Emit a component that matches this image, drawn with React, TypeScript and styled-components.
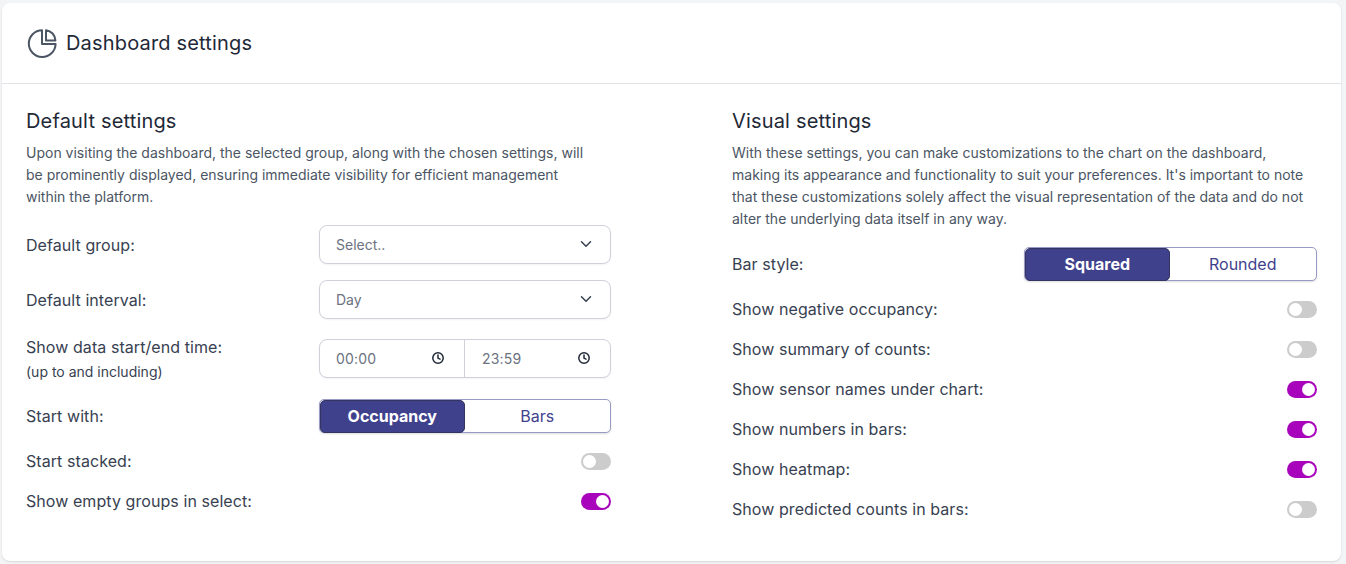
import React from "react";
import styled, { createGlobalStyle } from "styled-components";
import { ChevronDown } from "lucide-react";

const Global = createGlobalStyle`
  html, body { margin: 0; padding: 0; background: #f3f4f6; }
  body { font-family: Inter, "Noto Sans", sans-serif; color: #1f2937; }
  * { box-sizing: border-box; }
`;

const Page = styled.div`
  width: 1346px;
  height: 564px;
  padding: 3px 5px 3px 2px;
`;

const Card = styled.main`
  height: 558px;
  background: #fff;
  border-radius: 8px;
  box-shadow: 0 1px 2px rgba(0, 0, 0, 0.12);
`;

const Header = styled.header`
  height: 81px;
  display: flex;
  align-items: center;
  gap: 9px;
  padding: 0 24px 0 25px;
  border-bottom: 1px solid #e2e3e6;
`;

const Title = styled.h1`
  margin: 0;
  font-size: 20px;
  line-height: 28px;
  font-weight: 400;
  letter-spacing: 0.17px;
  color: #1f2937;
`;

const Body = styled.div`
  display: grid;
  grid-template-columns: 585px 585px;
  column-gap: 121px;
  padding: 23px 24px 0;
`;

const Column = styled.section`
  display: flex;
  flex-direction: column;
`;

const SectionTitle = styled.h2`
  margin: 0 0 7px;
  font-size: 20px;
  line-height: 28px;
  font-weight: 400;
  letter-spacing: 0.17px;
  color: #1f2937;
`;

const Description = styled.p<{ $gap: number }>`
  margin: 0 0 ${(p) => p.$gap}px;
  font-size: 14px;
  line-height: 22px;
  color: #4b5563;
`;

const Row = styled.div<{ $height: number; $gap?: number }>`
  height: ${(p) => p.$height}px;
  margin-bottom: ${(p) => p.$gap ?? 0}px;
  display: flex;
  align-items: center;
  justify-content: space-between;
`;

const Label = styled.div`
  font-size: 16px;
  line-height: 24px;
  font-weight: 400;
  letter-spacing: 0.07px;
  color: #374151;
`;

const SubLabel = styled.div`
  font-size: 14px;
  line-height: 20px;
  font-weight: 400;
  color: #374151;
  margin-top: 3px;
`;

const Control = styled.div`
  width: 292px;
  height: 39px;
  display: flex;
  align-items: center;
  border: 1px solid #d1d1dc;
  border-radius: 8px;
  background: #fff;
  box-shadow: 0 1px 2px rgba(0, 0, 0, 0.05);
`;

const SelectBox = styled(Control)`
  justify-content: space-between;
  padding: 0 16px;
  color: #6b7280;
  font-size: 14px;
`;

const Chevron = styled(ChevronDown)`
  width: 18px;
  height: 18px;
  color: #374151;
  margin-right: -1px;
  margin-top: -2px;
`;

const TimePart = styled.div`
  flex: 0 0 144px;
  height: 100%;
  display: flex;
  align-items: center;
  justify-content: space-between;
  padding: 0 20px 0 16px;
  color: #6b7280;
  font-size: 14px;
  letter-spacing: 0.2px;
  & + & {
    border-left: 1px solid #d1d1dc;
    flex-basis: 146px;
    padding-left: 17px;
  }
`;

const ClockIcon = styled.svg`
  width: 12px;
  height: 12px;
  margin-top: -2px;
  fill: none;
  stroke: #1f2937;
  stroke-width: 1.5;
  stroke-linecap: round;
  stroke-linejoin: round;
`;

const Segmented = styled.div<{ $wide?: boolean }>`
  width: ${(p) => (p.$wide ? 293 : 292)}px;
  height: 34px;
  display: grid;
  grid-template-columns: 144.5px 1fr;
  border: 1px solid #9a9ac6;
  border-radius: 5px;
  background: #fff;
  box-shadow: 0 1px 2px rgba(0, 0, 0, 0.14);
`;

const Segment = styled.div<{ $active?: boolean }>`
  margin: ${(p) => (p.$active ? "-0.5px" : "0")};
  display: flex;
  align-items: center;
  justify-content: center;
  font-size: 16px;
  font-weight: ${(p) => (p.$active ? 700 : 400)};
  color: ${(p) => (p.$active ? "#fff" : "#3f418d")};
  background: ${(p) => (p.$active ? "#3f418d" : "transparent")};
  border: ${(p) => (p.$active ? "1px solid #33345f" : "none")};
  border-radius: 5px;
`;

const Toggle = styled.span<{ $on?: boolean }>`
  position: relative;
  display: block;
  width: 30px;
  height: 17px;
  border-radius: 9px;
  background: ${(p) => (p.$on ? "#a804bb" : "#cccccc")};
  &::after {
    content: "";
    position: absolute;
    top: 2px;
    left: ${(p) => (p.$on ? "15px" : "2px")};
    width: 13px;
    height: 13px;
    border-radius: 50%;
    background: #fff;
  }
`;

const PieIcon = () => (
  <svg width="30" height="30" viewBox="0 0 30 30" fill="none" stroke="#4b5563" strokeWidth="2" strokeLinejoin="round" strokeLinecap="round">
    <path d="M15 2.2A13.4 13.4 0 1 0 28.6 16H15Z" />
    <path d="M19 2.2V12.4H28.4A10.6 10.6 0 0 0 19 2.2Z" />
  </svg>
);

const Clock = () => (
  <ClockIcon viewBox="0 0 12 12">
    <circle cx="6" cy="6" r="5.2" />
    <path d="M6 3v3.2l2 1" />
  </ClockIcon>
);

const SwitchRow = ({ label, on }: { label: string; on?: boolean }) => (
  <Row $height={40}>
    <Label>{label}</Label>
    <Toggle $on={on} />
  </Row>
);

export default function App() {
  return (
    <Page>
      <Global />
      <Card>
        <Header>
          <PieIcon />
          <Title>Dashboard settings</Title>
        </Header>
        <Body>
          <Column>
            <SectionTitle>Default settings</SectionTitle>
            <Description $gap={17}>
              Upon visiting the dashboard, the selected group, along with the chosen settings, will
              <br />
              be prominently displayed, ensuring immediate visibility for efficient management
              <br />
              within the platform.
            </Description>
            <Row $height={39} $gap={16}>
              <Label>Default group:</Label>
              <SelectBox>
                Select..
                <Chevron />
              </SelectBox>
            </Row>
            <Row $height={39} $gap={20}>
              <Label>Default interval:</Label>
              <SelectBox>
                Day
                <Chevron />
              </SelectBox>
            </Row>
            <Row $height={39} $gap={21}>
              <div>
                <Label>Show data start/end time:</Label>
                <SubLabel>(up to and including)</SubLabel>
              </div>
              <Control>
                <TimePart>
                  00:00
                  <Clock />
                </TimePart>
                <TimePart>
                  23:59
                  <Clock />
                </TimePart>
              </Control>
            </Row>
            <Row $height={34} $gap={8}>
              <Label>Start with:</Label>
              <Segmented>
                <Segment $active>Occupancy</Segment>
                <Segment>Bars</Segment>
              </Segmented>
            </Row>
            <SwitchRow label="Start stacked:" />
            <SwitchRow label="Show empty groups in select:" on />
          </Column>
          <Column>
            <SectionTitle>Visual settings</SectionTitle>
            <Description $gap={17}>
              With these settings, you can make customizations to the chart on the dashboard,
              <br />
              making its appearance and functionality to suit your preferences. It's important to note
              <br />
              that these customizations solely affect the visual representation of the data and do not
              <br />
              alter the underlying data itself in any way.
            </Description>
            <Row $height={34} $gap={8}>
              <Label>Bar style:</Label>
              <Segmented $wide>
                <Segment $active>Squared</Segment>
                <Segment>Rounded</Segment>
              </Segmented>
            </Row>
            <SwitchRow label="Show negative occupancy:" />
            <SwitchRow label="Show summary of counts:" />
            <SwitchRow label="Show sensor names under chart:" on />
            <SwitchRow label="Show numbers in bars:" on />
            <SwitchRow label="Show heatmap:" on />
            <SwitchRow label="Show predicted counts in bars:" />
          </Column>
        </Body>
      </Card>
    </Page>
  );
}
